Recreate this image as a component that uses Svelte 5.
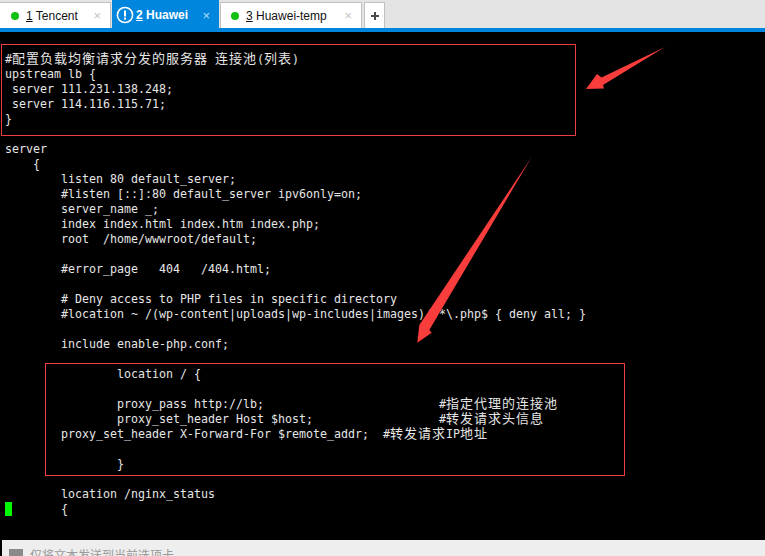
<script>
  const tabs = [
    { num: '1', name: 'Tencent', width: 111 },
    { num: '2', name: 'Huawei', width: 107, active: true },
    { num: '3', name: 'Huawei-temp', width: 142 }
  ];

  const lines = [
    '',
    '#配置负载均衡请求分发的服务器 连接池(列表)',
    'upstream lb {',
    ' server 111.231.138.248;',
    ' server 114.116.115.71;',
    '}',
    '',
    'server',
    '    {',
    '        listen 80 default_server;',
    '        #listen [::]:80 default_server ipv6only=on;',
    '        server_name _;',
    '        index index.html index.htm index.php;',
    '        root  /home/wwwroot/default;',
    '',
    '        #error_page   404   /404.html;',
    '',
    '        # Deny access to PHP files in specific directory',
    '        #location ~ /(wp-content|uploads|wp-includes|images)/.*\\.php$ { deny all; }',
    '',
    '        include enable-php.conf;',
    '',
    '                location / {',
    '',
    '                proxy_pass http://lb;                         #指定代理的连接池',
    '                proxy_set_header Host $host;                  #转发请求头信息',
    '        proxy_set_header X-Forward-For $remote_addr;  #转发请求IP地址',
    '',
    '                }',
    '',
    '        location /nginx_status',
    '        {'
  ];

  // CJK glyphs sit on a two-column cell, so split them from the ascii runs
  function runs(line) {
    return line.split(/([\u4e00-\u9fff]+)/).filter(Boolean).map((text) => ({
      text,
      wide: /[\u4e00-\u9fff]/.test(text)
    }));
  }
</script>

<div class="window">
  <div class="tabbar">
    {#each tabs as tab}
      <div class="tab" class:active={tab.active} style="width: {tab.width}px">
        {#if tab.active}
          <svg class="alert" width="18" height="18" viewBox="0 0 18 18">
            <circle cx="9" cy="9" r="7.6" fill="none" stroke="#fff" stroke-width="1.5" />
            <rect x="8" y="4.5" width="2" height="6" fill="#fff" />
            <rect x="8" y="11.6" width="2" height="2" fill="#fff" />
          </svg>
        {:else}
          <span class="dot"></span>
        {/if}
        <span class="label"><u>{tab.num}</u> {tab.name}</span>
        <span class="close">×</span>
      </div>
    {/each}
    <div class="tab plus">
      <svg width="10" height="10" viewBox="0 0 10 10">
        <path d="M4 1h2v3h3v2H6v3H4V6H1V4h3z" fill="#4a4a4a" />
      </svg>
    </div>
  </div>

  <div class="terminal">
    {#each lines as line, i}
      <div class="line">
        {#if i === lines.length - 1}<span class="cursor"></span>{line.slice(1)}{:else}{#each runs(line) as run}{#if run.wide}<span class="wide">{run.text}</span>{:else}{run.text}{/if}{/each}{/if}
      </div>
    {/each}

    <div class="mark mark-top"></div>
    <div class="mark mark-bottom"></div>
    <svg class="arrows" width="765" height="508" viewBox="0 32 765 508">
      <polygon points="665,47 603,85 604,88.5 586,89 597,74 601.5,77.5" />
      <polygon points="531.7,157 429.3,330 431.7,332.7 417.3,342.7 419.3,325 422.7,320" />
    </svg>
  </div>

  <div class="sendbar">
    <span class="sendicon"></span>
    <span class="sendtext">仅将文本发送到当前选项卡</span>
  </div>
</div>

<style>
  :global(body) {
    margin: 0;
    overflow: hidden;
  }

  .window {
    display: flex;
    flex-direction: column;
    width: 765px;
    height: 556px;
    overflow: hidden;
    background: #000;
  }

  .tabbar {
    display: flex;
    align-items: flex-end;
    gap: 1px;
    height: 28px;
    background: #e4e4e4;
    border-bottom: 4px solid #0086dd;
    font-family: "Liberation Sans", Arial, sans-serif;
    font-size: 12px;
    color: #111;
  }

  .tab {
    position: relative;
    display: flex;
    align-items: center;
    box-sizing: border-box;
    height: 26px;
    padding-left: 10px;
    background: #fff;
    border: 1px solid #c0c0c0;
    border-bottom: none;
  }

  .tab:first-child {
    padding-left: 11px;
    border-left: none;
  }

  .tab.active {
    height: 28px;
    padding-left: 4px;
    padding-top: 2px;
    background: #0086dd;
    border: none;
    color: #fff;
    font-weight: 700;
  }

  .dot {
    width: 8px;
    height: 8px;
    border-radius: 50%;
    background: #12c012;
  }

  .alert {
    flex: none;
  }

  .label {
    margin-left: 7px;
    white-space: nowrap;
  }

  .active .label {
    margin-left: 2px;
  }

  .close {
    margin-left: auto;
    margin-right: 9px;
    font-size: 13px;
    color: #c4c4c4;
  }

  .active .close {
    color: #b6dcf5;
    font-weight: 400;
  }

  .tab.plus {
    justify-content: center;
    width: 21px;
    margin-left: 1px;
    padding-left: 0;
  }

  .terminal {
    position: relative;
    flex: none;
    height: 508px;
    box-sizing: border-box;
    padding: 5px 0 0 5px;
    font-family: "DejaVu Sans Mono", monospace;
    font-size: 11.63px;
    line-height: 15px;
    color: #e6e6e6;
    white-space: pre;
    overflow: hidden;
  }

  .line {
    height: 15px;
  }

  .wide {
    display: inline-block;
    height: 15px;
    vertical-align: top;
    font-family: "Noto Sans CJK SC", sans-serif;
    font-size: 13px;
    line-height: 11px;
    letter-spacing: 1px;
  }

  .cursor {
    display: inline-block;
    width: 7px;
    height: 14px;
    vertical-align: -3px;
    background: #00f800;
  }

  .mark {
    position: absolute;
    box-sizing: border-box;
    border: 1px solid #f03c3c;
  }

  .mark-top {
    left: 1px;
    top: 12px;
    width: 575px;
    height: 92px;
  }

  .mark-bottom {
    left: 45px;
    top: 331px;
    width: 580px;
    height: 113px;
  }

  .arrows {
    position: absolute;
    left: 0;
    top: 0;
    fill: #f93c3c;
  }

  .sendbar {
    flex: none;
    display: flex;
    align-items: flex-start;
    gap: 7px;
    height: 16px;
    margin-left: 2px;
    padding: 9px 0 0 7px;
    background: #eee;
  }

  .sendicon {
    flex: none;
    width: 14px;
    height: 14px;
    background: #8a8a8a;
  }

  .sendtext {
    font-family: "Noto Sans CJK SC", sans-serif;
    font-size: 12px;
    line-height: 12px;
    color: #9a9a9a;
    white-space: nowrap;
  }
</style>
